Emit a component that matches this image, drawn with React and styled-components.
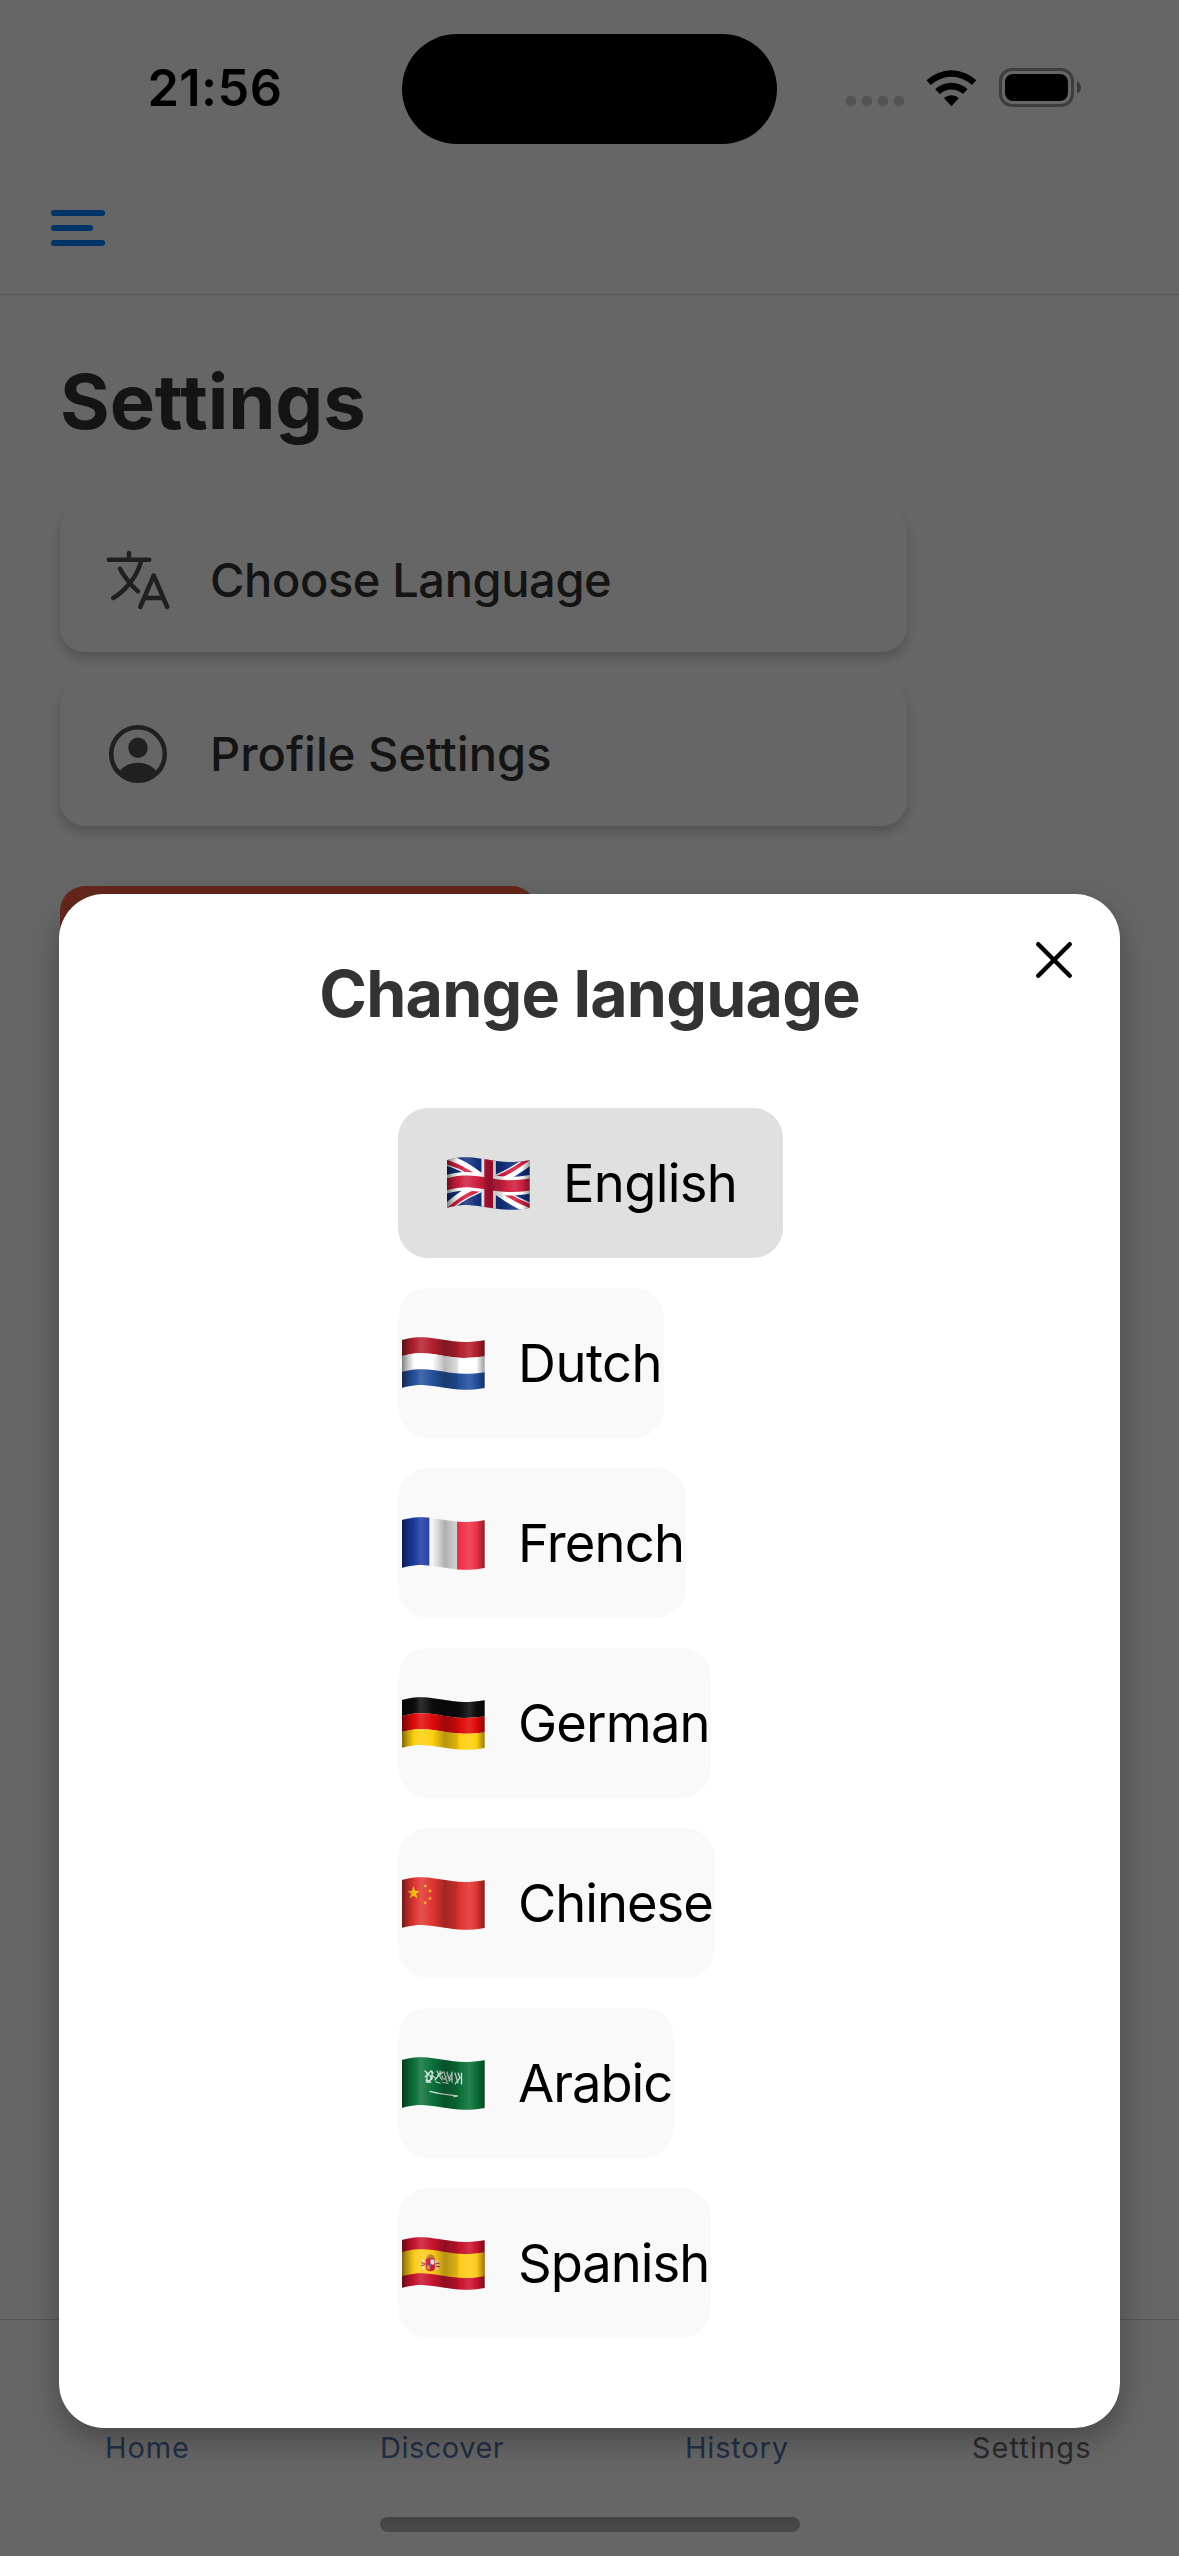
import React from "react";
import styled, { createGlobalStyle } from "styled-components";
import { IoLanguageOutline } from "react-icons/io5";

const GlobalStyle = createGlobalStyle`
  *, *::before, *::after { box-sizing: border-box; }
  body { margin: 0; background: #fff; }
`;

const Screen = styled.div`
  position: relative;
  display: flex;
  flex-direction: column;
  width: 1179px;
  height: 2556px;
  overflow: hidden;
  background: #fff;
  font-family: Inter, "Liberation Sans", sans-serif;
  color: #333;
`;

/* ---------- status bar ---------- */

const StatusBar = styled.div`
  display: grid;
  grid-template-columns: 402px 375px 1fr;
  align-items: center;
  flex: none;
  height: 177px;
  padding-bottom: 2px;
`;

const Clock = styled.div`
  padding-left: 28px;
  text-align: center;
  font-size: 50.5px;
  font-weight: 600;
  line-height: 60px;
  letter-spacing: 0.4px;
  color: #000;
`;

const Island = styled.div`
  height: 110px;
  margin-top: 3px;
  border-radius: 55px;
  background: #000;
`;

const StatusIcons = styled.div`
  display: flex;
  justify-content: flex-end;
  align-items: center;
  height: 39px;
  padding-right: 98px;
`;

const SignalDots = styled.div`
  display: flex;
  align-self: flex-end;
  gap: 6px;
  margin: 0 22px 1px 0;
`;

const SignalDot = styled.i`
  width: 10px;
  height: 10px;
  border-radius: 4px;
  background: #d2d2d2;
`;

const WifiGlyph = styled.svg`
  display: block;
  width: 51px;
  height: 38px;
  margin-right: 22px;
`;

const BatteryGlyph = styled.svg`
  display: block;
  width: 82px;
  height: 39px;
`;

/* ---------- header ---------- */

const Header = styled.header`
  display: flex;
  align-items: flex-start;
  flex: none;
  height: 118px;
  padding: 33px 51px 0;
  border-bottom: 1px solid #d8d8d8;
`;

const MenuButton = styled.button`
  display: flex;
  flex-direction: column;
  gap: 9px;
  padding: 0;
  border: 0;
  background: none;
`;

const MenuLine = styled.span`
  width: ${(p) => (p.$short ? 42 : 54)}px;
  height: 6px;
  border-radius: 3px;
  background: #007fff;
`;

/* ---------- settings page ---------- */

const Content = styled.main`
  flex: 1;
  min-height: 0;
  padding: 61px 60px 0;
`;

const PageTitle = styled.h1`
  margin: 0 0 60px;
  font-size: 76px;
  font-weight: 700;
  line-height: 91px;
  letter-spacing: -0.1px;
`;

const OptionCard = styled.button`
  display: flex;
  align-items: center;
  gap: 36px;
  width: 847px;
  height: 145px;
  margin-bottom: 29px;
  padding: 0 42px;
  border: 0;
  border-radius: 25px;
  background: #fff;
  box-shadow: 0 6px 12px rgba(0, 0, 0, 0.2);
  font: 500 47px/60px Inter, "Liberation Sans", sans-serif;
  letter-spacing: ${(p) => p.$track}px;
  color: #333;
`;

const OptionIcon = styled.span`
  display: flex;
  width: 72px;
  height: 72px;
  color: #505050;
  font-size: 72px;
`;

const LogoutButton = styled.button`
  display: block;
  width: 477px;
  height: 132px;
  margin-top: 60px;
  border: 0;
  border-radius: 25px;
  background: #ff6347;
`;

/* ---------- tab bar ---------- */

const TabBar = styled.nav`
  display: flex;
  flex-direction: column;
  align-items: center;
  flex: none;
  height: 237px;
  padding-top: 110px;
  border-top: 1px solid #d8d8d8;
`;

const Tabs = styled.div`
  display: grid;
  grid-template-columns: repeat(4, 1fr);
  width: 100%;
`;

const Tab = styled.span`
  text-align: center;
  font-size: 29px;
  line-height: 36px;
  letter-spacing: ${(p) => p.$track}px;
  color: ${(p) => (p.$active ? "#6d6d72" : "#5676ac")};
`;

const HomeIndicator = styled.div`
  width: 420px;
  height: 15px;
  margin-top: 51px;
  border-radius: 8px;
  background: linear-gradient(#a6a6a6, #bababa);
`;

/* ---------- modal ---------- */

const Overlay = styled.div`
  position: absolute;
  inset: 0;
  display: flex;
  flex-direction: column;
  align-items: center;
  padding-top: 894px;
  background: rgba(0, 0, 0, 0.6);
`;

const Modal = styled.section`
  position: relative;
  display: flex;
  flex-direction: column;
  align-items: center;
  width: 1061px;
  height: 1534px;
  padding: 60px 0 90px 2px;
  border-radius: 45px;
  background: #fff;
  box-shadow: 0 12px 30px rgba(0, 0, 0, 0.3);
`;

const CloseButton = styled.button`
  position: absolute;
  top: 30px;
  right: 30px;
  width: 72px;
  height: 72px;
  padding: 0;
  border: 0;
  background: none;
`;

const ModalTitle = styled.h2`
  margin: 0 2px 74px 0;
  font-size: 64.5px;
  font-weight: 700;
  line-height: 80px;
  letter-spacing: -0.8px;
  color: #333;
`;

const LanguageList = styled.div`
  display: flex;
  flex-direction: column;
  align-items: flex-start;
  gap: 30px;
  width: 385px;
`;

const LanguageButton = styled.button`
  display: flex;
  align-items: center;
  gap: 33px;
  width: ${(p) => p.$width}px;
  height: 150px;
  padding: 0 0 0 ${(p) => (p.$selected ? 49 : 4)}px;
  border: 0;
  border-radius: 30px;
  background: ${(p) => (p.$selected ? "#e0e0e0" : "#f9f9f9")};
  font: 400 52.5px/66px Inter, "Liberation Sans", sans-serif;
  letter-spacing: ${(p) => p.$track}px;
  white-space: nowrap;
  color: #000;
`;

const FlagSvg = styled.svg`
  display: block;
  flex: none;
  width: 83px;
  height: 53px;
`;

/* ---------- flag drawing ---------- */

const W = 82.6;
const H = 47.8;

const lift = (u) =>
  u < 0.21
    ? 2.8 * Math.pow((0.21 - u) / 0.21, 1.6)
    : 2.4 - 2.4 * Math.cos((2 * Math.PI * (u - 0.21)) / 1.12);

const warp = (u, v) => [u * W, v * H + lift(u) + 0.2];

/* Turns a polygon in unit coordinates into a path that follows the cloth's wave. */
const cloth = (points) => {
  const out = [];
  points.forEach(([u0, v0], i) => {
    const [u1, v1] = points[(i + 1) % points.length];
    const steps = 16;
    for (let s = 0; s < steps; s += 1) {
      const t = s / steps;
      const [x, y] = warp(u0 + (u1 - u0) * t, v0 + (v1 - v0) * t);
      out.push(`${x.toFixed(2)} ${y.toFixed(2)}`);
    }
  });
  return `M${out.join("L")}Z`;
};

const band = (u0, v0, u1, v1) => cloth([[u0, v0], [u1, v0], [u1, v1], [u0, v1]]);
const poly60 = (points) => cloth(points.map(([x, y]) => [x / 60, y / 30]));

const star = (cx, cy, r, turn = 0) => {
  const pts = [];
  for (let i = 0; i < 10; i += 1) {
    const rad = i % 2 ? r * 0.4 : r;
    const a = -Math.PI / 2 + turn + (i * Math.PI) / 5;
    pts.push(`${(cx + rad * Math.cos(a)).toFixed(2)},${(cy + rad * Math.sin(a)).toFixed(2)}`);
  }
  return pts.join(" ");
};

const Stripes = ({ colors }) =>
  colors.map((c, i) => (
    <path key={c} fill={c} d={band(0, i / colors.length, 1, (i + 1) / colors.length)} />
  ));

const flags = {
  gb: (
    <>
      <path fill="#12307c" d={band(0, 0, 1, 1)} />
      <g fill="#fff">
        <path d={poly60([[0, 0], [7.4, 0], [60, 26.3], [60, 30], [52.6, 30], [0, 3.7]])} />
        <path d={poly60([[60, 0], [52.6, 0], [0, 26.3], [0, 30], [7.4, 30], [60, 3.7]])} />
      </g>
      <g fill="#cf1f3f">
        <path d={poly60([[0, 0], [30, 15], [24.4, 15], [0, 2.8]])} />
        <path d={poly60([[60, 30], [30, 15], [35.6, 15], [60, 27.2]])} />
        <path d={poly60([[60, 0], [30, 15], [24.4, 15], [54.4, 0]])} />
        <path d={poly60([[0, 30], [30, 15], [35.6, 15], [5.6, 30]])} />
      </g>
      <path fill="#fff" d={band(0.417, 0, 0.592, 1)} />
      <path fill="#fff" d={band(0, 0.31, 1, 0.7)} />
      <path fill="#cf1f3f" d={band(0, 0.38, 1, 0.63)} />
      <path fill="#c4143a" d={band(0.452, 0, 0.557, 1)} />
    </>
  ),
  nl: <Stripes colors={["#b3202e", "#fff", "#24509c"]} />,
  fr: (
    <>
      <path fill="#1c3a9f" d={band(0, 0, 0.335, 1)} />
      <path fill="#f4f4f4" d={band(0.333, 0, 0.668, 1)} />
      <path fill="#ee3248" d={band(0.667, 0, 1, 1)} />
    </>
  ),
  de: <Stripes colors={["#0c0c0c", "#df0a0a", "#fed00f"]} />,
  cn: (
    <>
      <path fill="#e03430" d={band(0, 0, 1, 1)} />
      <g fill="#f5bf17">
        <polygon points={star(11.5, 16, 6.8)} />
        <polygon points={star(23.3, 9, 2.2, 0.3)} />
        <polygon points={star(28, 14, 2.2, 0.6)} />
        <polygon points={star(28, 21.4, 2.2, 0)} />
        <polygon points={star(23.3, 25.8, 2.2, 0.3)} />
      </g>
    </>
  ),
  sa: (
    <>
      <path fill="#0b7039" d={band(0, 0, 1, 1)} />
      <g fill="none" stroke="#fff" strokeOpacity=".85" strokeWidth="1.25" strokeLinecap="round">
        <path d="M23 14l3 3 3-3 2 2M23 20c2-3 5-3 6 0s-3 5-5 3M25 17v6M30 14v8l-3 2M31 19c2 3 4 3 5-1l3-3M33 23l5-6M35 14l2 4 3 5M38 14v4l3-3M40 19c1 4 4 4 4 0M42 15l3 10M45 15l2 7 3-6M47 24l3-3M50 15v10M53 16l3 10M56 16l2 5-5 6M59.500 16v11M24 25l5 0M34 25l4 1M41 25.500l5 1" />
        <path strokeWidth="1.300" d="M28 34.300c8 2.400 17 3 27 4.700" />
        <path d="M52 39.600l3-.6" />
      </g>
    </>
  ),
  es: (
    <>
      <path fill="#c8142f" d={band(0, 0, 1, 1)} />
      <path fill="#fecb1c" d={band(0, 0.25, 1, 0.755)} />
      <path fill="#b98a2a" d="M24.500 20.500l1-2 3-1.500 3.200 1.600.8 2-4 1z" />
      <rect x="20.300" y="23" width="2" height="9" fill="#e9dcc4" />
      <rect x="34.600" y="24" width="2" height="9" fill="#e9dcc4" />
      <path d="M19.300 25.500l4 1.500M19.300 29l3.500-1.500M33.500 27l4-1M34 29.500l4 0" stroke="#b5243a" strokeWidth="1.200" />
      <path fill="#c22034" d="M23.700 22h9.300v8c0 3-2 4.300-4.600 4.300s-4.700-1.300-4.700-4.300z" />
      <path fill="#e9d9d9" d="M28.500 22.500h4v5h-4z" />
      <path fill="#d9962e" d="M24.800 28.500h3v4.500l-3-1.500z" />
      <circle cx="28.400" cy="27.800" r="1.400" fill="#4a62a8" />
      <path d="M24.500 21.300h8" stroke="#a3202f" strokeWidth="1" />
    </>
  ),
};

const Flag = ({ code }) => (
  <FlagSvg viewBox="0 0 83 53" aria-hidden="true">
    <defs>
      <linearGradient id={`fold-${code}`} x1="0" x2="1" y1="0" y2="0">
        <stop offset="0" stopColor="#000" stopOpacity=".5" />
        <stop offset=".08" stopColor="#000" stopOpacity=".2" />
        <stop offset=".15" stopColor="#000" stopOpacity="0" />
        <stop offset=".15" stopColor="#fff" stopOpacity="0" />
        <stop offset=".23" stopColor="#fff" stopOpacity=".15" />
        <stop offset=".37" stopColor="#fff" stopOpacity="0" />
        <stop offset=".37" stopColor="#000" stopOpacity="0" />
        <stop offset=".52" stopColor="#000" stopOpacity=".28" />
        <stop offset=".66" stopColor="#000" stopOpacity=".14" />
        <stop offset=".7" stopColor="#000" stopOpacity="0" />
        <stop offset=".7" stopColor="#fff" stopOpacity="0" />
        <stop offset=".82" stopColor="#fff" stopOpacity=".12" />
        <stop offset=".9" stopColor="#fff" stopOpacity="0" />
        <stop offset=".9" stopColor="#000" stopOpacity="0" />
        <stop offset="1" stopColor="#000" stopOpacity=".4" />
      </linearGradient>
    </defs>
    {flags[code]}
    <path fill={`url(#fold-${code})`} d={band(0, 0, 1, 1)} />
  </FlagSvg>
);

/* ---------- icons ---------- */

const Wifi = () => (
  <WifiGlyph viewBox="0 0 51 38">
    <path d="M0.500 11.300A36 36 0 0 1 50.300 11.300L45.900 16A29.600 29.600 0 0 0 4.900 16Z" />
    <path d="M9.200 20.300A23.500 23.500 0 0 1 41.600 20.300L36.900 25A16.800 16.800 0 0 0 13.900 25Z" />
    <path d="M17.900 29A11.800 11.800 0 0 1 32.900 29L25.400 37.300Z" />
  </WifiGlyph>
);

const Battery = () => (
  <BatteryGlyph viewBox="0 0 82 39">
    <rect x="1.500" y="1.500" width="72" height="36" rx="11.500" fill="none" stroke="#999" strokeWidth="3" />
    <rect x="6" y="6" width="63" height="27" rx="8" />
    <path fill="#8c8c8c" d="M78 13.500c5.300 2 5.300 10 0 12z" />
  </BatteryGlyph>
);

const ProfileGlyph = () => (
  <svg viewBox="0 0 72 72" width="72" height="72">
    <circle cx="36" cy="36" r="26.800" fill="none" stroke="currentColor" strokeWidth="4.600" />
    <ellipse cx="36" cy="29.700" rx="9.700" ry="10.200" fill="currentColor" />
    <path fill="currentColor" d="M17.500 53.500C22 47.500 29 44.800 36 44.800S50 47.500 54.500 53.500C49 60 43 63 36 63S23 60 17.500 53.500Z" />
  </svg>
);

const CloseGlyph = () => (
  <svg viewBox="0 0 72 72" width="72" height="72">
    <path d="M20.250 20.250l31.500 31.500M51.750 20.250l-31.500 31.500" stroke="#000" strokeWidth="4.500" strokeLinecap="round" />
  </svg>
);

const languages = [
  { code: "gb", name: "English", width: 385, track: -0.7, selected: true },
  { code: "nl", name: "Dutch", width: 266, track: -0.5 },
  { code: "fr", name: "French", width: 288, track: -0.8 },
  { code: "de", name: "German", width: 313, track: -0.85 },
  { code: "cn", name: "Chinese", width: 317, track: -1.05 },
  { code: "sa", name: "Arabic", width: 276, track: -1 },
  { code: "es", name: "Spanish", width: 313, track: -1 },
];

const tabs = [
  { name: "Home", track: 0.9 },
  { name: "Discover", track: 0.5 },
  { name: "History", track: 0.8 },
  { name: "Settings", track: 1.1, active: true },
];

export default function App() {
  return (
    <>
      <GlobalStyle />
      <Screen>
        <StatusBar>
          <Clock>21:56</Clock>
          <Island />
          <StatusIcons>
            <SignalDots>
              <SignalDot />
              <SignalDot />
              <SignalDot />
              <SignalDot />
            </SignalDots>
            <Wifi />
            <Battery />
          </StatusIcons>
        </StatusBar>
        <Header>
          <MenuButton aria-label="Menu">
            <MenuLine />
            <MenuLine $short />
            <MenuLine />
          </MenuButton>
        </Header>
        <Content>
          <PageTitle>Settings</PageTitle>
          <OptionCard $track={-0.4}>
            <OptionIcon>
              <IoLanguageOutline />
            </OptionIcon>
            Choose Language
          </OptionCard>
          <OptionCard $track={0.05}>
            <OptionIcon>
              <ProfileGlyph />
            </OptionIcon>
            Profile Settings
          </OptionCard>
          <LogoutButton />
        </Content>
        <TabBar>
          <Tabs>
            {tabs.map((t) => (
              <Tab key={t.name} $track={t.track} $active={t.active}>
                {t.name}
              </Tab>
            ))}
          </Tabs>
          <HomeIndicator />
        </TabBar>
        <Overlay>
          <Modal>
            <CloseButton aria-label="Close">
              <CloseGlyph />
            </CloseButton>
            <ModalTitle>Change language</ModalTitle>
            <LanguageList>
              {languages.map((l) => (
                <LanguageButton key={l.code} $width={l.width} $track={l.track} $selected={l.selected}>
                  <Flag code={l.code} />
                  {l.name}
                </LanguageButton>
              ))}
            </LanguageList>
          </Modal>
        </Overlay>
      </Screen>
    </>
  );
}
